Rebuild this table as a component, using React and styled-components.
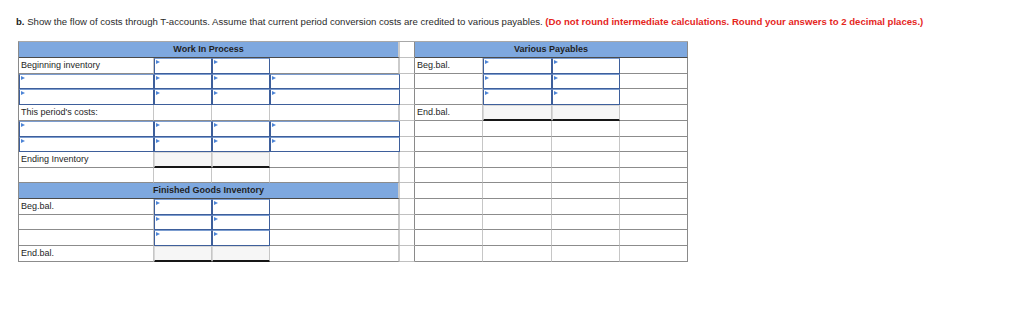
import React from 'react';
import styled, { createGlobalStyle } from 'styled-components';

const GlobalStyle = createGlobalStyle`
  body {
    margin: 0;
    background: #ffffff;
    font-family: 'Liberation Sans', Arial, sans-serif;
  }
`;

const COLUMNS = '135px 58px 58px 130px 15px 68px 69px 68px 68px';
const ROW_HEIGHTS = [16, 16, 15, 16, 16, 16, 15, 16, 15, 16, 16, 15, 16, 16];

// left side: WIP / FGI account, right side: Various Payables
const ROWS = [
  { head: 'Work In Process', right: { head: 'Various Payables' } },
  { left: [['L', 'Beginning inventory'], ['I'], ['I'], ['']], right: [['L', 'Beg.bal.'], ['I'], ['I'], ['']] },
  { left: [['I'], ['I'], ['I'], ['I']], right: [[''], ['I'], ['I'], ['']] },
  { left: [['I'], ['I'], ['I'], ['I']], right: [[''], ['I'], ['I'], ['']] },
  { left: [['L', "This period's costs:"], [''], [''], ['']], right: [['L', 'End.bal.'], ['T'], ['T'], ['']] },
  { left: [['I'], ['I'], ['I'], ['I']] },
  { left: [['I'], ['I'], ['I'], ['I']] },
  { left: [['L', 'Ending Inventory'], ['T'], ['T'], ['']] },
  { left: [[''], [''], [''], ['']] },
  { head: 'Finished Goods Inventory' },
  { left: [['L', 'Beg.bal.'], ['I'], ['I'], ['']] },
  { left: [[''], ['I'], ['I'], ['']] },
  { left: [[''], ['I'], ['I'], ['']] },
  { left: [['L', 'End.bal.'], ['T'], ['T'], ['']] },
];

const EMPTY = [[''], [''], [''], ['']];

export default function App() {
  return (
    <Page>
      <GlobalStyle />
      <Prompt>
        <b>b.</b> Show the flow of costs through T-accounts. Assume that current period conversion costs are
        credited to various payables.{' '}
        <Warn>(Do not round intermediate calculations. Round your answers to 2 decimal places.)</Warn>
      </Prompt>
      <Table $rows={ROW_HEIGHTS.map((h) => `${h}px`).join(' ')}>
        {ROWS.map((row, r) => {
          const right = row.right || EMPTY;
          return (
            <React.Fragment key={r}>
              {row.head ? (
                <Header $span={4}>{row.head}</Header>
              ) : (
                row.left.map(([kind, text], c) => renderCell(kind, text, c, `l${r}-${c}`))
              )}
              <Spacer />
              {right.head ? (
                <Header $span={4} $last>{right.head}</Header>
              ) : (
                right.map(([kind, text], c) => renderCell(kind, text, c + 5, `r${r}-${c}`))
              )}
            </React.Fragment>
          );
        })}
      </Table>
    </Page>
  );
}

function renderCell(kind, text, col, key) {
  const wide = col === 3;
  const last = col === 8;
  if (kind === 'I') return <InputCell key={key} $wide={wide} $last={last} />;
  if (kind === 'T') return <TotalCell key={key} $wide={wide} $last={last} />;
  return (
    <Cell key={key} $wide={wide} $last={last}>
      {text}
    </Cell>
  );
}

const Page = styled.div`
  padding: 15px 0 0 18px;
`;

const Prompt = styled.div`
  margin-left: -2px;
  padding-top: 1px;
  height: 25px;
  font-size: 9.6px;
  line-height: 12px;
  color: #2b2b2b;
  white-space: nowrap;

  b {
    font-weight: bold;
    color: #222;
  }
`;

const Warn = styled.span`
  font-weight: bold;
  color: #e5261d;
`;

const Table = styled.div`
  display: grid;
  grid-template-columns: ${COLUMNS};
  grid-template-rows: ${(p) => p.$rows};
  width: max-content;
  border-left: 1px solid #8a8a8a;
  border-top: 1px solid #a8a8a8;
`;

const Cell = styled.div`
  box-sizing: border-box;
  display: flex;
  align-items: center;
  padding: 0 2px 1px;
  overflow: hidden;
  white-space: nowrap;
  font-size: 9px;
  color: #1e1e1e;
  background: #ffffff;
  border-bottom: 1px solid #8c8c8c;
  border-right: ${(p) =>
    p.$last ? '1px solid #8a8a8a' : p.$wide ? '2px solid #cbcbcb' : '1px solid #c6c6c6'};
`;

const InputCell = styled(Cell)`
  position: relative;
  border: 1px solid #3e5f9b;
  border-top-color: #7c9dd0;

  &::before {
    content: '';
    position: absolute;
    top: 1px;
    left: 1px;
    border-left: 4px solid #4d84d6;
    border-top: 2px solid transparent;
    border-bottom: 2px solid transparent;
  }
`;

const TotalCell = styled(Cell)`
  background: #f6f6f6;
  border-top: 1px solid #d8d8d8;
  border-left: 1px solid #d8d8d8;
  border-bottom: 2px solid #161616;
`;

const Header = styled.div`
  grid-column: span ${(p) => p.$span};
  box-sizing: border-box;
  display: flex;
  align-items: center;
  justify-content: center;
  padding-bottom: 1px;
  font-size: 9px;
  font-weight: bold;
  color: #1f1f1f;
  background: #7ea8df;
  border-bottom: 1px solid #4a4a4a;
  border-right: ${(p) => (p.$last ? '1px solid #8a8a8a' : '2px solid #cbcbcb')};
`;

const Spacer = styled.div`
  box-sizing: border-box;
  background: #ffffff;
  border-bottom: 1px solid #c0c0c0;
  border-right: 1px solid #8a8a8a;
`;
